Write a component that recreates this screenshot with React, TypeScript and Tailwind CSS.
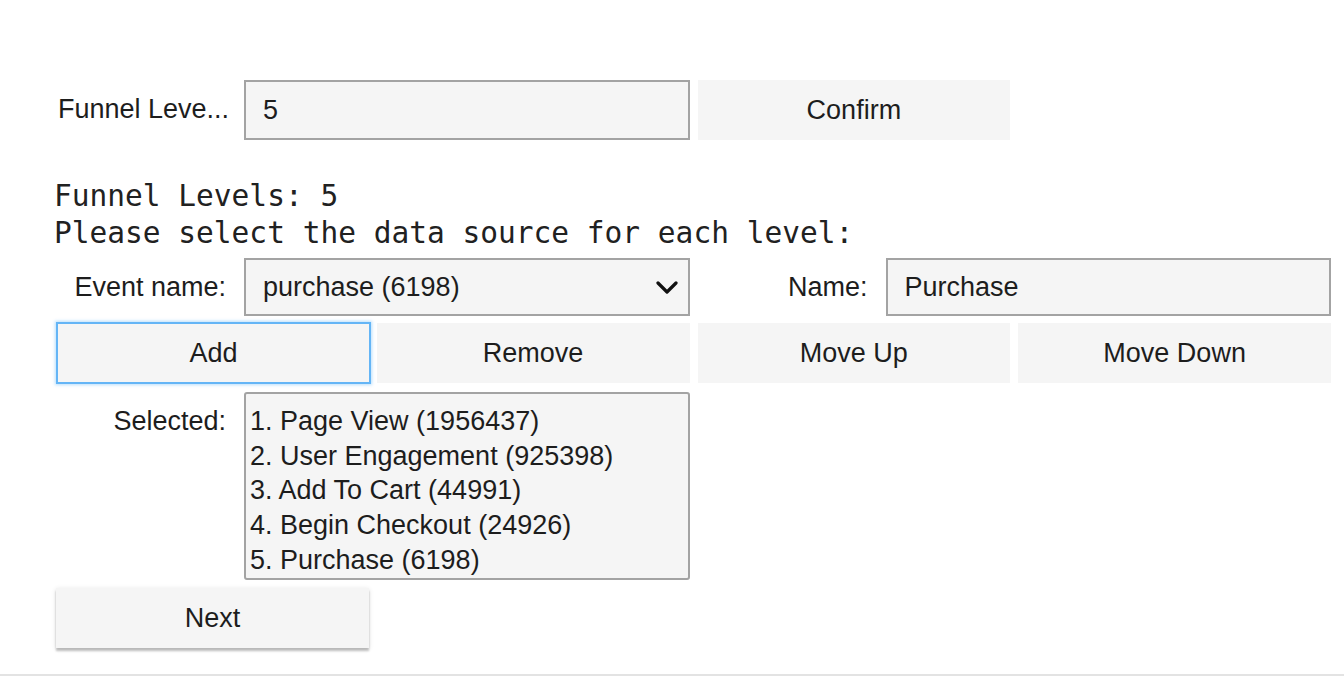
import React from "react";

const SELECTED = [
  "1. Page View (1956437)",
  "2. User Engagement (925398)",
  "3. Add To Cart (44991)",
  "4. Begin Checkout (24926)",
  "5. Purchase (6198)",
];

const sans = "font-['Liberation_Sans',Arial,sans-serif]";
const fieldCls =
  "flex h-full min-w-0 flex-1 items-center border-2 border-[#a3a3a3] bg-[#f5f5f5] pl-[17px] text-[27px] text-[#1d1d1d]";
const btnCls =
  "flex h-[60px] items-center justify-center bg-[#f5f5f5] text-[27px] text-[#1d1d1d]";

function Label({ children }: { children: React.ReactNode }) {
  return (
    <div className="w-[180px] shrink-0 truncate pr-[10px] text-right text-[27px] leading-[58px] text-[#1d1d1d]">
      {children}
    </div>
  );
}

function Chevron() {
  return (
    <svg width="22" height="13" viewBox="0 0 22 13" fill="none" aria-hidden>
      <path
        d="M2 2 L11 11 L20 2"
        stroke="#111"
        strokeWidth="3.2"
        strokeLinecap="round"
        strokeLinejoin="round"
      />
    </svg>
  );
}

export default function App() {
  return (
    <div className={`h-[676px] w-[1344px] overflow-hidden bg-white ${sans}`}>
      <div className="pl-[56px] pr-[13px] pt-[80px]">
        {/* Funnel level input + confirm */}
        <div className="grid h-[58px] grid-cols-4 gap-x-[8px]">
          <div className="col-span-2 flex h-full">
            {/* label is cut short in the original widget */}
            <div className="w-[180px] shrink-0 pl-[2px] text-[27px] leading-[58px] text-[#1d1d1d]">
              Funnel Leve...
            </div>
            <div className={`ml-[8px] ${fieldCls}`}>5</div>
          </div>
          <button className={`${btnCls} h-[58px]`}>Confirm</button>
        </div>

        {/* Printed output */}
        <pre className="-ml-[2px] mt-[40px] font-['DejaVu_Sans_Mono',monospace] text-[29.5px] leading-[37px] text-[#212121]">
          {"Funnel Levels: 5\nPlease select the data source for each level:"}
        </pre>

        {/* Event picker + name */}
        <div className="mt-[6px] grid h-[57px] grid-cols-4 gap-x-[8px]">
          <div className="col-span-2 flex h-full">
            <Label>Event name:</Label>
            <div className={`ml-[8px] justify-between pr-[10px] ${fieldCls}`}>
              <span>purchase (6198)</span>
              <Chevron />
            </div>
          </div>
          <div className="col-span-2 flex h-full">
            <Label>Name:</Label>
            <div className={`ml-[8px] ${fieldCls}`}>Purchase</div>
          </div>
        </div>

        {/* Action buttons */}
        <div className="mt-[7px] grid grid-cols-4 gap-x-[8px]">
          <button className={`${btnCls} h-[62px] w-[315px] border-2 border-[#64b5f6] shadow-[0_0_3px_1px_rgba(100,181,246,0.45)]`}>
            Add
          </button>
          <button className={`${btnCls} mt-px`}>Remove</button>
          <button className={`${btnCls} mt-px`}>Move Up</button>
          <button className={`${btnCls} mt-px`}>Move Down</button>
        </div>

        {/* Selected list */}
        <div className="mt-[8px] grid grid-cols-4 gap-x-[8px]">
          <div className="col-span-2 flex">
            <Label>Selected:</Label>
            <div className="ml-[8px] h-[188px] flex-1 rounded-[3px] border-2 border-[#a3a3a3] bg-[#f5f5f5] px-[4px] pt-[10px] text-[27px] leading-[34.7px] text-[#1d1d1d]">
              {SELECTED.map((s) => (
                <div key={s}>{s}</div>
              ))}
            </div>
          </div>
        </div>

        <button
          className={`${btnCls} mt-[8px] w-[313px] shadow-[0_3px_2px_0_rgba(0,0,0,0.22),0_1px_5px_0_rgba(0,0,0,0.12)]`}
        >
          Next
        </button>
      </div>

      <div className="mt-[26px] border-t-2 border-[#e3e3e3]" />
    </div>
  );
}
